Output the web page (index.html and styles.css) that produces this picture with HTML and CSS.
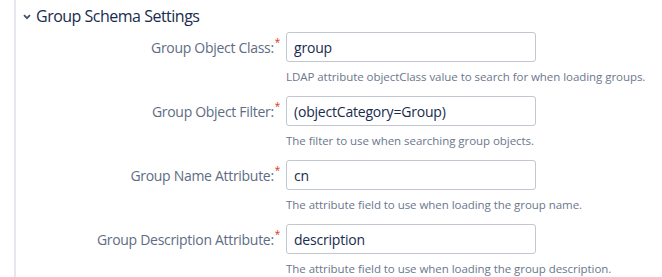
FILE: index.html
```html
<!DOCTYPE html>
<html lang="en">
<head>
    <meta charset="UTF-8">
    <title>Group Schema Settings</title>
    <link rel="stylesheet" href="styles.css">
</head>
<body>
    <div class="section">
        <h2 class="section-title">
            <svg class="chevron" width="8" height="6" viewBox="0 0 8 6"><path d="M1 1.2 L4 4.2 L7 1.2" fill="none" stroke="#42526e" stroke-width="1.8"/></svg>
            Group Schema Settings
        </h2>

        <div class="field">
            <label class="field-label">Group Object Class:<span class="req">*</span></label>
            <div class="field-body">
                <input type="text" class="text-input" value="group">
                <div class="help">LDAP attribute objectClass value to search for when loading groups.</div>
            </div>
        </div>

        <div class="field">
            <label class="field-label">Group Object Filter:<span class="req">*</span></label>
            <div class="field-body">
                <input type="text" class="text-input" value="(objectCategory=Group)">
                <div class="help">The filter to use when searching group objects.</div>
            </div>
        </div>

        <div class="field">
            <label class="field-label">Group Name Attribute:<span class="req">*</span></label>
            <div class="field-body">
                <input type="text" class="text-input" value="cn">
                <div class="help">The attribute field to use when loading the group name.</div>
            </div>
        </div>

        <div class="field">
            <label class="field-label">Group Description Attribute:<span class="req">*</span></label>
            <div class="field-body">
                <input type="text" class="text-input" value="description">
                <div class="help">The attribute field to use when loading the group description.</div>
            </div>
        </div>
    </div>
</body>
</html>
```

FILE: styles.css
```css
body {
    font-family: 'Open Sans', 'Noto Sans', sans-serif;
    background-color: #fff;
    margin: 0;
    color: #172b4d;
}

.section {
    margin-left: 14px;
    border-left: 2px solid #e4e7ec;
    height: 277px;
    box-sizing: border-box;
    padding-left: 6px;
    overflow: hidden;
}

.section-title {
    margin: 0;
    height: 32px;
    display: flex;
    align-items: center;
    font-size: 16px;
    font-weight: normal;
    color: #172b4d;
    letter-spacing: -0.5px;
}

.chevron {
    margin: 1px 5px 0 1px;
}

.field {
    display: flex;
    margin-bottom: 11px;
}

.field-label {
    width: 258px;
    height: 30px;
    flex-shrink: 0;
    display: flex;
    justify-content: flex-end;
    align-items: center;
    font-size: 14px;
    color: #5e6c84;
    letter-spacing: -0.3px;
}

.req {
    color: #de350b;
    font-size: 10px;
    align-self: flex-start;
    margin: 3px 0 0 1px;
}

.field-body {
    margin-left: 6px;
}

.text-input {
    box-sizing: border-box;
    width: 250px;
    height: 30px;
    border: 1px solid #c1c7d0;
    border-radius: 3px;
    padding: 0 7px;
    font-family: inherit;
    font-size: 14px;
    color: #172b4d;
    letter-spacing: -0.2px;
}

.help {
    margin-top: 7px;
    font-size: 11.5px;
    line-height: 16px;
    color: #6b778c;
    letter-spacing: -0.05px;
    white-space: nowrap;
}
```
